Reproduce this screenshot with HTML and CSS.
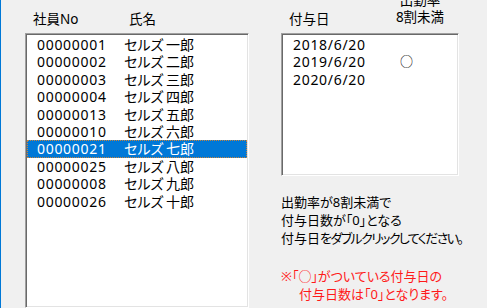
FILE: index.html
```html
<!DOCTYPE html>
<html lang="ja">
<head>
  <meta charset="UTF-8">
  <title>付与日数の設定</title>
  <link rel="stylesheet" href="styles.css">
</head>
<body>
  <div class="window">
    <div class="panel-left">
      <div class="list-head">
        <span class="col-no">社員No</span>
        <span class="col-name">氏名</span>
      </div>
      <div class="listbox staff-list">
        <div class="row"><span class="no">00000001</span><span class="sei">セルズ</span><span class="mei">一郎</span></div>
        <div class="row"><span class="no">00000002</span><span class="sei">セルズ</span><span class="mei">二郎</span></div>
        <div class="row"><span class="no">00000003</span><span class="sei">セルズ</span><span class="mei">三郎</span></div>
        <div class="row"><span class="no">00000004</span><span class="sei">セルズ</span><span class="mei">四郎</span></div>
        <div class="row"><span class="no">00000013</span><span class="sei">セルズ</span><span class="mei">五郎</span></div>
        <div class="row"><span class="no">00000010</span><span class="sei">セルズ</span><span class="mei">六郎</span></div>
        <div class="row selected"><span class="no">00000021</span><span class="sei">セルズ</span><span class="mei">七郎</span></div>
        <div class="row"><span class="no">00000025</span><span class="sei">セルズ</span><span class="mei">八郎</span></div>
        <div class="row"><span class="no">00000008</span><span class="sei">セルズ</span><span class="mei">九郎</span></div>
        <div class="row"><span class="no">00000026</span><span class="sei">セルズ</span><span class="mei">十郎</span></div>
      </div>
    </div>

    <div class="panel-right">
      <div class="list-head">
        <span class="col-date">付与日</span>
        <span class="col-rate">出勤率<br>8割未満</span>
      </div>
      <div class="listbox grant-list">
        <div class="row"><span class="date">2018/6/20</span><span class="mark"></span></div>
        <div class="row"><span class="date">2019/6/20</span><span class="mark">○</span></div>
        <div class="row"><span class="date">2020/6/20</span><span class="mark"></span></div>
      </div>
      <p class="note">出勤率が8割未満で<br>付与日数が「0」となる<br>付与日<span class="tight">をダブルクリックしてください。</span></p>
      <p class="warn">※「○」がついている付与日の<br><span class="indent">付与日数は「0」となります。</span></p>
    </div>
  </div>
</body>
</html>
```

FILE: styles.css
```css
body {
  margin: 0;
  background-color: #f0f0f0;
  font-family: "Noto Sans", "Noto Sans CJK JP", sans-serif;
  font-feature-settings: "palt";
  color: #000;
  overflow: hidden;
}
.window {
  height: 308px;
  border-left: 1px solid #0078d7;
  padding-left: 24px;
  display: flex;
  box-sizing: border-box;
}
.panel-left {
  width: 224px;
  display: flex;
  flex-direction: column;
}
.panel-right {
  width: 178px;
  margin-left: 32px;
}
.list-head {
  height: 33px;
  box-sizing: border-box;
  padding-top: 10px;
  display: flex;
  font-size: 13.5px;
  line-height: 18px;
}
.col-no {
  width: 96px;
  padding-left: 8px;
}
.col-date {
  width: 100px;
  padding-left: 8px;
}
.col-rate {
  margin-top: -18px;
  width: 62px;
  text-align: center;
  line-height: 17px;
}
.listbox {
  background-color: #fff;
  border: 1px solid;
  border-color: #a0a0a0 #fff #fff #a0a0a0;
  box-shadow: inset 1px 1px 0 #696969, inset -1px -1px 0 #e3e3e3;
  padding: 2px 1px 0 1px;
  font-size: 14px;
}
.staff-list {
  flex: 1;
}
.grant-list {
  height: 143px;
  box-sizing: border-box;
}
.row {
  display: flex;
  height: 17.4px;
  line-height: 17.4px;
  padding-left: 10px;
  white-space: nowrap;
}
.row.selected {
  background-color: #0078d7;
  color: #fff;
  outline: 1px dotted #c8843c;
  outline-offset: -1px;
}
.no {
  width: 87px;
  letter-spacing: 0.7px;
}
.sei {
  width: 42px;
  flex-shrink: 0;
}
.date {
  width: 107px;
  letter-spacing: 0.7px;
}
.mark {
  font-size: 13px;
}
.note, .warn {
  margin: 0;
  font-size: 13px;
  line-height: 18px;
  white-space: nowrap;
}
.note {
  margin-top: 17px;
}
.tight {
  letter-spacing: -1.6px;
}
.warn {
  margin-top: 20px;
  color: #ff1a1a;
}
.indent {
  padding-left: 18px;
}
```
